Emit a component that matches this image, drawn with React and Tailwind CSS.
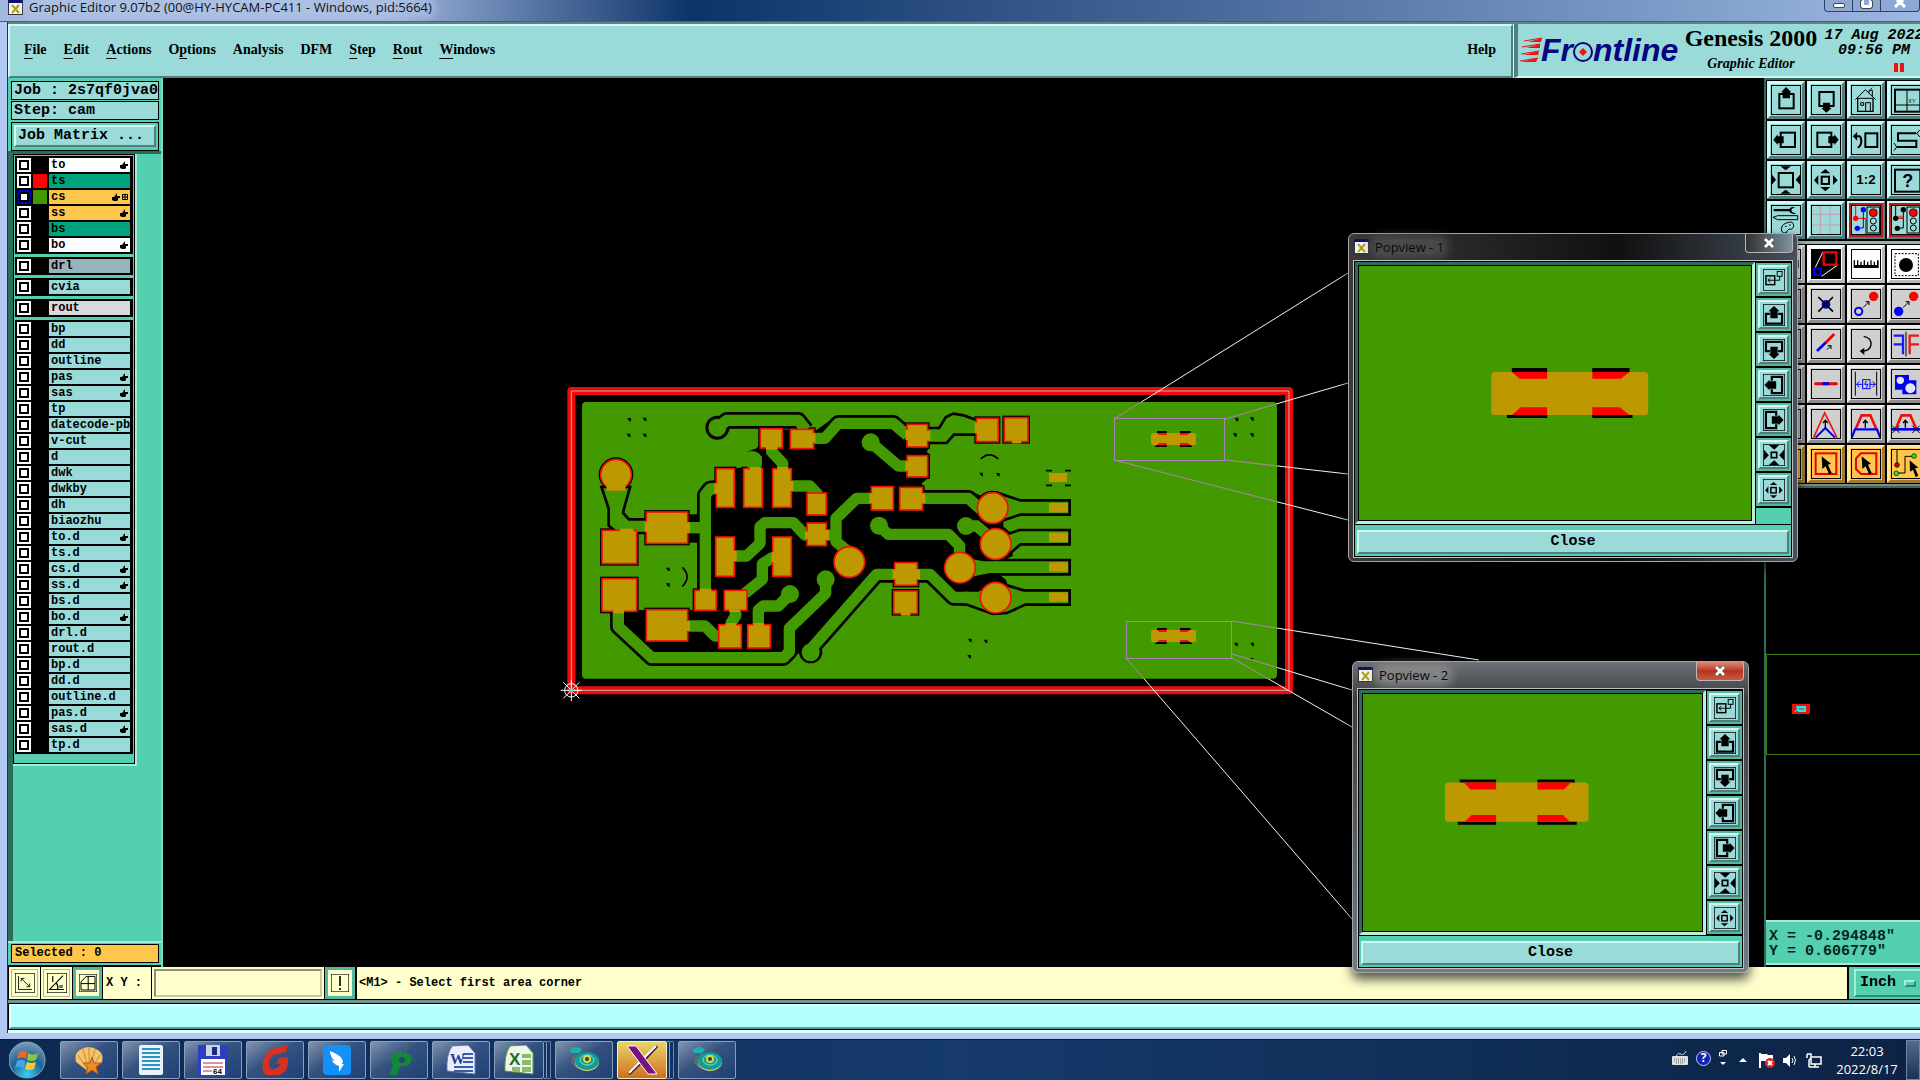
import { useState } from 'react';
import clsx from 'clsx';

const RAISED = 'border-2 border-t-[#d3f8f4] border-l-[#d3f8f4] border-b-[#4f7f80] border-r-[#4f7f80]';

const menus = [
  ['', 'F', 'ile'],
  ['', 'E', 'dit'],
  ['', 'A', 'ctions'],
  ['O', 'p', 'tions'],
  ['Analysis', '', ''],
  ['DFM', '', ''],
  ['', 'S', 'tep'],
  ['', 'R', 'out'],
  ['', 'W', 'indows'],
];

const AQUA = 'bg-[#9adbda]';

const layerGroups = [
  [
    { name: 'to', bg: 'bg-white', hand: true },
    { name: 'ts', bg: 'bg-[#00a47c]', swatch: 'bg-[#ff0000]' },
    { name: 'cs', bg: 'bg-[#ffc64c]', swatch: 'bg-[#439a00]', hand: true, grid: true, active: true },
    { name: 'ss', bg: 'bg-[#ffc64c]', hand: true },
    { name: 'bs', bg: 'bg-[#00a47c]' },
    { name: 'bo', bg: 'bg-white', hand: true },
  ],
  [{ name: 'drl', bg: 'bg-[#99b3bd]' }],
  [{ name: 'cvia' }],
  [{ name: 'rout', bg: 'bg-[#d9d9dc]' }],
  [
    { name: 'bp' },
    { name: 'dd' },
    { name: 'outline' },
    { name: 'pas', hand: true },
    { name: 'sas', hand: true },
    { name: 'tp' },
    { name: 'datecode-pbc' },
    { name: 'v-cut' },
    { name: 'd' },
    { name: 'dwk' },
    { name: 'dwkby' },
    { name: 'dh' },
    { name: 'biaozhu' },
    { name: 'to.d', hand: true },
    { name: 'ts.d' },
    { name: 'cs.d', hand: true },
    { name: 'ss.d', hand: true },
    { name: 'bs.d' },
    { name: 'bo.d', hand: true },
    { name: 'drl.d' },
    { name: 'rout.d' },
    { name: 'bp.d' },
    { name: 'dd.d' },
    { name: 'outline.d' },
    { name: 'pas.d', hand: true },
    { name: 'sas.d', hand: true },
    { name: 'tp.d' },
  ],
];

// Tool glyphs, all drawn on a 90x90 grid
const glyphs = {
  up: (
    <>
      <rect x="25" y="27" width="43" height="43" fill="none" stroke="#000" strokeWidth="6" />
      <path d="M45 6L61 22H57V40H35V22H30Z" />
    </>
  ),
  down: (
    <>
      <rect x="25" y="21" width="43" height="42" fill="none" stroke="#000" strokeWidth="6" />
      <path d="M46 83L62 69H57V53H36V69H31Z" />
    </>
  ),
  left: (
    <>
      <rect x="29" y="23" width="43" height="43" fill="none" stroke="#000" strokeWidth="6" />
      <path d="M7 44L20 28V34H38V55H20V60Z" />
    </>
  ),
  right: (
    <>
      <rect x="19" y="23" width="42" height="43" fill="none" stroke="#000" strokeWidth="6" />
      <path d="M83 44L70 28V34H52V55H70V60Z" />
    </>
  ),
  popUp: (
    <>
      <path d="M28 40H12V80H78V40H62" fill="none" stroke="#000" strokeWidth="9" />
      <path d="M45 8L68 30H60V58H30V30H22Z" />
    </>
  ),
  popDown: (
    <>
      <path d="M28 50H12V12H78V50H62" fill="none" stroke="#000" strokeWidth="9" />
      <path d="M45 82L68 60H60V32H30V60H22Z" />
    </>
  ),
  popLeft: (
    <>
      <path d="M36 28V12H78V78H36V62" fill="none" stroke="#000" strokeWidth="9" />
      <path d="M6 45L26 24V30H54V60H26V66Z" />
    </>
  ),
  popRight: (
    <>
      <path d="M54 28V12H12V78H54V62" fill="none" stroke="#000" strokeWidth="9" />
      <path d="M84 45L64 24V30H36V60H64V66Z" />
    </>
  ),
  home: (
    <g fill="none" stroke="#000" strokeWidth="3">
      <path d="M13 44L43 14L74 44M64 34V16H54V24M58 14l5-6" />
      <path d="M20 40V79H66V40" strokeWidth="4" />
      <path d="M20 40H66M29 53h9v8h-9zM44 79V53H58V79" />
    </g>
  ),
  panes: (
    <>
      <rect x="12" y="14" width="76" height="66" fill="none" stroke="#000" strokeWidth="6" />
      <path d="M48 14V80M12 60H88" stroke="#000" strokeWidth="3" />
      <text x="52" y="54" fontSize="16" fontFamily="Liberation Sans">XY</text>
    </>
  ),
  undo: (
    <g fill="none" stroke="#000" strokeWidth="6">
      <rect x="43" y="25" width="36" height="41" />
      <path d="M16 34H26Q31 38 31 50Q30 64 20 68" />
      <path d="M6 34L18 22V46Z" fill="#000" strokeWidth="1" />
    </g>
  ),
  snake: (
    <g fill="none" stroke="#000" strokeWidth="6">
      <path d="M76 25H21V47H76V66H18" />
      <path d="M86 15L78 25L86 36M9 54L17 66L9 77" strokeWidth="3" />
    </g>
  ),
  zoomIn: (
    <>
      <rect x="23" y="24" width="43" height="43" fill="none" stroke="#000" strokeWidth="6" />
      <path d="M28 4H60L44 16ZM28 86H60L44 74ZM2 28V60L15 44ZM88 28V60L74 44Z" />
    </>
  ),
  zoomOut: (
    <>
      <rect x="32" y="35" width="22" height="22" fill="none" stroke="#000" strokeWidth="6" />
      <path d="M28 25H58L43 12ZM28 66H58L43 79ZM22 30V60L9 46ZM66 30V60L80 46Z" />
    </>
  ),
  squeeze: (
    <>
      <rect x="34" y="34" width="22" height="22" fill="none" stroke="#000" strokeWidth="7" />
      <path d="M24 4H66L46 24ZM24 86H66L46 66ZM4 24V66L24 46ZM86 24V66L66 46Z" />
    </>
  ),
  ratio: (
    <text x="45" y="58" textAnchor="middle" fontSize="40" fontWeight="bold" fontFamily="Liberation Sans">1:2</text>
  ),
  help: (
    <>
      <rect x="12" y="14" width="76" height="66" fill="none" stroke="#000" strokeWidth="6" />
      <text x="50" y="66" textAnchor="middle" fontSize="54" fontWeight="bold" fontFamily="Liberation Sans">?</text>
    </>
  ),
  tools: (
    <>
      <path d="M8 12H55Q60 4 72 7L62 12V20L76 26Q60 30 54 19H8Z" />
      <path d="M6 37L20 32H80V44H20Z" fill="none" stroke="#000" strokeWidth="3" />
      <path d="M32 78Q28 60 46 54Q68 46 68 62Q66 76 54 72Q48 76 46 84Q34 86 32 78ZM42 64h5M54 60h5" fill="none" stroke="#000" strokeWidth="3" />
    </>
  ),
  gridLines: <path d="M28 0V90M57 0V90M0 28H90M0 60H90" stroke="#c79ba7" strokeWidth="3" />,
  signalBlue: (
    <>
      <path d="M14 0V40H44V88" fill="none" stroke="#f00" strokeWidth="3" />
      <path d="M37 14V69H20" fill="none" stroke="#00f" strokeWidth="3" />
      <circle cx="14" cy="40" r="8" fill="#f00" />
      <circle cx="37" cy="14" r="8" fill="#00f" />
      <circle cx="19" cy="70" r="8" fill="#00f" />
      <Traffic />
    </>
  ),
  signalBlack: (
    <>
      <path d="M14 0V40M37 14V69H20" fill="none" stroke="#000" strokeWidth="3" />
      <path d="M22 40H38M24 32v8M30 32v8M36 32v8" stroke="#d00" strokeWidth="3" />
      <circle cx="14" cy="40" r="8" />
      <circle cx="37" cy="14" r="8" />
      <circle cx="19" cy="70" r="8" />
      <Traffic />
    </>
  ),
  popview: (
    <>
      <rect width="90" height="90" />
      <path d="M12 57L36 8M32 82L80 48" stroke="#fff" strokeWidth="3" />
      <rect x="38" y="10" width="38" height="37" fill="none" stroke="#f00000" strokeWidth="7" />
      <rect x="10" y="58" width="20" height="20" fill="none" stroke="#0000f0" strokeWidth="6" />
    </>
  ),
  ruler: <path d="M8 34H12V48H18V34H22V48H28V38H32V48H38V34H42V48H48V38H52V48H58V34H62V48H68V38H72V48H78V34H83V57H8Z" />,
  blob: (
    <>
      <rect x="12" y="14" width="70" height="66" fill="none" stroke="#000" strokeWidth="3" strokeDasharray="6 4" />
      <circle cx="45" cy="48" r="21" />
    </>
  ),
  cross: (
    <>
      <circle cx="45" cy="46" r="13" fill="#0000e6" />
      <path d="M22 24L66 68M66 24L22 68" stroke="#000" strokeWidth="5" />
    </>
  ),
  moveOpen: (
    <>
      <circle cx="23" cy="67" r="11" fill="none" stroke="#00f" strokeWidth="6" />
      <circle cx="68" cy="22" r="14" fill="#f00" />
      <Diagonal x={36} y={56} />
    </>
  ),
  moveSolid: (
    <>
      <circle cx="23" cy="67" r="14" fill="#00f" />
      <circle cx="68" cy="22" r="14" fill="#f00" />
      <Diagonal x={36} y={56} />
    </>
  ),
  line: (
    <>
      <path d="M18 66L45 40" stroke="#0000f0" strokeWidth="8" />
      <path d="M43 42L70 15" stroke="#f00000" strokeWidth="8" />
      <Diagonal x={48} y={62} small />
    </>
  ),
  rotate: (
    <>
      <path d="M38 22Q62 26 60 48Q56 66 36 66" fill="none" stroke="#000" strokeWidth="4" />
      <path d="M26 66L40 56V78Z" />
    </>
  ),
  mirror: (
    <>
      <path d="M8 20H36V76M8 46H36" fill="none" stroke="#1a1aff" strokeWidth="7" />
      <path d="M45 8V82" stroke="#000" strokeWidth="3" />
      <path d="M84 20H56V76M56 46H84" fill="none" stroke="#e81818" strokeWidth="7" />
    </>
  ),
  segment: (
    <>
      <path d="M14 44H76" stroke="#f00000" strokeWidth="9" strokeLinecap="round" />
      <path d="M34 44H54" stroke="#0000f0" strokeWidth="9" />
    </>
  ),
  stretch: (
    <>
      <path d="M13 8V80M77 8V80" stroke="#000" strokeWidth="3" />
      <path d="M17 46H73M25 37L17 46L25 55M65 37L73 46L65 55" fill="none" stroke="#00f" strokeWidth="3" />
      <rect x="35" y="32" width="22" height="27" fill="#cfcfcf" stroke="#00f" strokeWidth="3" />
      <path d="M46 36L41 46H51L46 56" fill="none" stroke="#00f" strokeWidth="3" />
    </>
  ),
  shapes: (
    <>
      <path d="M12 18H54V34H76V76H34V62H12Z" fill="#0000f0" />
      <circle cx="28" cy="34" r="11" fill="#e4e4ff" />
      <circle cx="58" cy="58" r="15" fill="#e4e4ff" />
    </>
  ),
  peak: (
    <>
      <path d="M8 86L41 12L78 86" fill="none" stroke="#e81818" strokeWidth="5" />
      <path d="M14 86L43 57L72 86" fill="none" stroke="#0000f0" strokeWidth="6" />
      <Upward />
    </>
  ),
  trapezoid: (
    <>
      <path d="M14 60L32 19H58L76 60" fill="none" stroke="#f01010" strokeWidth="8" />
      <path d="M2 86L12 61H78L88 86" fill="none" stroke="#0000f0" strokeWidth="7" />
      <Upward />
    </>
  ),
  trapezoidCut: (
    <>
      <path d="M14 60L32 19H58L76 60" fill="none" stroke="#f01010" strokeWidth="8" />
      <path d="M2 61H88" stroke="#0000f0" strokeWidth="8" />
      <path d="M4 50L26 72M26 50L4 72M64 50L86 72M86 50L64 72" stroke="#000" strokeWidth="3" />
      <Upward />
    </>
  ),
  pickSquare: (
    <>
      <rect x="14" y="13" width="62" height="62" fill="none" stroke="#e60000" strokeWidth="6" />
      <Pointer />
    </>
  ),
  pickPoly: (
    <>
      <path d="M30 13H76V75H30L15 60V28Z" fill="none" stroke="#e60000" strokeWidth="6" />
      <Pointer />
    </>
  ),
  pickNet: (
    <>
      <path d="M18 0V48M18 72H42V22H68" fill="none" stroke="#000" strokeWidth="3" />
      <circle cx="18" cy="48" r="7" fill="#c00" stroke="#000" strokeWidth="2" />
      <circle cx="16" cy="73" r="7" fill="#2e2" stroke="#000" strokeWidth="2" />
      <circle cx="69" cy="21" r="7" fill="#2e2" stroke="#000" strokeWidth="2" />
      <path d="M56 34L82 56L72 57L82 80L74 84L66 62L57 68Z" />
    </>
  ),
  link: (
    <g fill="none" stroke="#000" strokeWidth="6">
      <rect x="12" y="28" width="36" height="36" />
      <path d="M20 46H68V28M30 37L20 46L30 55" strokeWidth="4" />
      <rect x="58" y="10" width="20" height="20" strokeWidth="4" />
    </g>
  ),
  diagonal: <path d="M16 14V74H76M28 24L66 62M28 38V24H42M66 48V62H52" fill="none" stroke="#000" strokeWidth="4" />,
  angle: (
    <>
      <path d="M76 74H12L72 12M26 14V40M42 46Q52 58 48 74" fill="none" stroke="#000" strokeWidth="5" />
      <text x="54" y="68" fontSize="28" fontFamily="Liberation Sans">α</text>
    </>
  ),
  snap: <path d="M10 80V40L36 12H80V80ZM10 48H80M46 12V80" fill="none" stroke="#000" strokeWidth="5" />,
  alert: <path d="M45 10V60M45 70V80" stroke="#000" strokeWidth="8" />,
};

function Traffic() {
  return (
    <>
      <rect x="48" y="6" width="38" height="78" fill="#9adbda" stroke="#000" strokeWidth="3" />
      <circle cx="67" cy="23" r="12" fill="#f00" stroke="#000" strokeWidth="2" />
      <circle cx="67" cy="48" r="9" fill="none" stroke="#000" strokeWidth="3" />
      <circle cx="67" cy="69" r="9" fill="none" stroke="#000" strokeWidth="3" />
    </>
  );
}

function Diagonal({ x, y, small }) {
  const d = small ? 12 : 18;
  return (
    <path
      d={`M${x} ${y}l${d} ${-d}m-10 0h10v10`}
      fill="none"
      stroke="#000"
      strokeWidth="3"
    />
  );
}

function Upward() {
  return <path d="M43 56V36M36 42L43 34L50 42" fill="none" stroke="#000" strokeWidth="4" />;
}

function Pointer() {
  return <path d="M32 22L60 44L51 47L62 72L54 76L44 52L34 60Z" />;
}

function Glyph({ name, className }) {
  return (
    <svg viewBox="0 0 90 90" className={className} aria-hidden="true">
      {glyphs[name]}
      <rect x="1.5" y="1.5" width="87" height="87" fill="none" stroke="#000" strokeWidth="3" />
    </svg>
  );
}

const tones = {
  aqua: 'bg-[#9adbda] border-t-[#d3f8f4] border-l-[#d3f8f4] border-b-[#4f7f80] border-r-[#4f7f80]',
  red: 'bg-[#9adbda] border-t-[#d3f8f4] border-l-[#d3f8f4] border-b-[#4f7f80] border-r-[#4f7f80]',
  white: 'bg-white border-t-white border-l-white border-b-[#b9b9b9] border-r-[#b9b9b9]',
  grey: 'bg-[#cfcfcf] border-t-[#eeeeee] border-l-[#eeeeee] border-b-[#8e8e8e] border-r-[#8e8e8e]',
  orange: 'bg-[#ffc64c] border-t-[#ffe6a8] border-l-[#ffe6a8] border-b-[#9c7a2e] border-r-[#9c7a2e]',
};

function ToolButton({ glyph, tone }) {
  return (
    <button aria-label={glyph} className={clsx('flex size-[38px] items-center justify-center border-3', tones[tone])}>
      <Glyph name={glyph} className={clsx('size-[30px]', tone === 'red' && 'outline-2 outline-[#c01818]')} />
    </button>
  );
}

const viewTools = [
  'up', 'down', 'home', 'panes',
  'left', 'right', 'undo', 'snake',
  'zoomIn', 'zoomOut', 'ratio', 'help',
  'tools', 'gridLines', 'signalBlue', 'signalBlack',
];

const editTools = [
  ['ruler', 'white'], ['popview', 'white'], ['ruler', 'white'], ['blob', 'white'],
  ['moveOpen', 'grey'], ['cross', 'grey'], ['moveOpen', 'grey'], ['moveSolid', 'grey'],
  ['line', 'grey'], ['line', 'grey'], ['rotate', 'grey'], ['mirror', 'grey'],
  ['segment', 'grey'], ['segment', 'grey'], ['stretch', 'grey'], ['shapes', 'grey'],
  ['peak', 'grey'], ['peak', 'grey'], ['trapezoid', 'grey'], ['trapezoidCut', 'grey'],
  ['pickSquare', 'orange'], ['pickSquare', 'orange'], ['pickPoly', 'orange'], ['pickNet', 'orange'],
];

function XIcon() {
  return (
    <svg viewBox="0 0 15 15" className="size-[15px] shrink-0" aria-hidden="true">
      <rect x="0.5" y="0.5" width="14" height="14" fill="#f4f4f4" stroke="#333" />
      <rect x="0" y="0" width="15" height="3" fill="#10106a" />
      <path d="M4 5L11 13M11 5L4 13" stroke="#a8a414" strokeWidth="2" />
    </svg>
  );
}

function TitleBar() {
  return (
    <header className="flex h-[22px] shrink-0 items-start border-b border-[#4a6070] bg-linear-to-r from-[#a3b8e0] from-20% via-[#0b3468] via-36% to-[#9db8e2] pl-2">
      <div className="flex h-[14px] flex-1 items-center gap-[6px]">
        <XIcon />
        <h1 className="rounded-full bg-[#b5c8e8]/50 font-['Open_Sans',sans-serif] text-[13px] leading-[14px] whitespace-nowrap text-[#111] shadow-[0_0_6px_5px_rgba(181,200,232,0.5)]">
          Graphic Editor 9.07b2 (00@HY-HYCAM-PC411 - Windows, pid:5664)
        </h1>
      </div>
      <div className="flex h-[12px] rounded-b-sm border border-t-0 border-[#2c4166] bg-[#8fa9d4]">
        <button aria-label="Minimize" className="flex w-7 items-center justify-center border-r border-[#2c4166]">
          <span className="h-[5px] w-3 rounded-xs border border-[#444] bg-white" />
        </button>
        <button aria-label="Maximize" className="flex w-7 items-start justify-center border-r border-[#2c4166]">
          <span className="h-2 w-[11px] rounded-xs border-3 border-t-0 border-white outline outline-[#444]" />
        </button>
        <button aria-label="Close" className="flex w-[38px] items-start justify-center">
          <svg viewBox="0 0 12 8" className="h-2 w-3">
            <path d="M1 7L6 2L11 7M3 0L6 3L9 0" stroke="#fff" strokeWidth="3" fill="none" />
          </svg>
        </button>
      </div>
    </header>
  );
}

function Logo() {
  return (
    <svg viewBox="0 0 162 34" className="mt-[6px] h-[34px] w-[162px] shrink-0" role="img" aria-label="Frontline">
      <path d="M6 7L24 4M4 13L22 10M3 20L21 17M2 27L20 24" stroke="#e11" strokeWidth="1" />
      <path d="M24 4L10 8H23ZM22 10L8 14H22ZM21 17L5 21H20ZM20 24L3 28H18Z" fill="#f01515" />
      <g fill="#06067f" fontFamily="Liberation Sans, sans-serif" fontWeight="bold" fontStyle="italic" fontSize="32">
        <text x="23" y="27">Fr</text>
        <text x="75" y="27">ntline</text>
      </g>
      <circle cx="65" cy="18" r="9" fill="none" stroke="#06067f" strokeWidth="2" />
      <path d="M65 14L69 18L65 22L61 18Z" fill="#f01515" />
    </svg>
  );
}

function MenuBar() {
  return (
    <div className="flex h-[56px] shrink-0 gap-px border-t-2 border-[#5d8383] bg-[#d3f8f4]">
      <nav className={clsx('flex flex-1 items-center gap-[17px] pr-[15px] pb-[3px] pl-[14px]', AQUA, RAISED, 'font-["Liberation_Serif",serif] text-[14px] font-bold')}>
        {menus.map(([pre, key, post]) => (
          <button key={pre + key + post}>
            {pre}
            <span className="underline underline-offset-4">{key}</span>
            {post}
          </button>
        ))}
        <button className="ml-auto">Help</button>
      </nav>
      <div className={clsx('flex w-[406px] items-start overflow-hidden border-b-2 border-l-4 border-b-[#d3f8f4] border-l-[#4f7f80] pt-1', AQUA)}>
        <Logo />
        <div className="flex w-[142px] shrink-0 flex-col items-center font-['Liberation_Serif',serif] font-bold">
          <span className="text-[24px] leading-[20px] whitespace-nowrap">Genesis 2000</span>
          <span className="pt-[6px] text-[14px] leading-[20px] whitespace-nowrap italic">Graphic Editor</span>
        </div>
        <div className="flex w-[100px] shrink-0 flex-col items-center pl-1 font-['Liberation_Mono',monospace] text-[15px] leading-[15px] font-bold whitespace-pre italic">
          <span>17 Aug 2022</span>
          <span>09:56 PM</span>
          <span className="mt-[5px] mr-[18px] flex gap-[2px] self-end">
            <i className="h-[9px] w-1 bg-[#f01010]" />
            <i className="h-[9px] w-1 bg-[#f01010]" />
          </span>
        </div>
      </div>
    </div>
  );
}

function Hand() {
  return (
    <svg viewBox="0 0 8 8" className="size-2" aria-hidden="true">
      <path d="M0 4H2L5 0V3H8V5H6V7L5 8H2L0 7Z" />
    </svg>
  );
}

function LayerRow({ layer }) {
  const [on, setOn] = useState(false);
  return (
    <label className="flex h-4 gap-[2px] p-px">
      <span className={clsx('size-[14px] p-[2px]', layer.active ? 'bg-[#0000a8]' : 'bg-white')}>
        <input
          type="checkbox"
          checked={on}
          onChange={() => setOn(!on)}
          className="block size-[10px] appearance-none border-2 border-black bg-white checked:bg-black"
        />
      </span>
      <span className={clsx('size-[14px]', layer.swatch)} />
      <span className={clsx('flex h-[14px] w-[81px] items-center overflow-hidden pr-[2px] pl-[2px]', layer.bg ?? AQUA)}>
        <span className="flex-1 text-[12px] leading-[14px] whitespace-nowrap">{layer.name}</span>
        {layer.hand && <Hand />}
        {layer.grid && (
          <svg viewBox="0 0 6 6" className="ml-[2px] size-[6px]" aria-hidden="true">
            <path d="M0.500 0.500H5.500V5.500H0.500ZM3 0V6M0 3H6" fill="none" stroke="#000" />
          </svg>
        )}
      </span>
    </label>
  );
}

function Sidebar() {
  return (
    <aside className="flex w-[155px] shrink-0 flex-col border-r-2 border-[#7fd9c2] bg-[#54cfaf] pt-[3px] font-['Liberation_Mono',monospace] font-bold">
      <div className="flex flex-col gap-px pr-[2px] pl-[3px] text-[15px]">
        <div className={clsx('h-[19px] border border-black pl-[2px] leading-[17px] whitespace-pre', AQUA)}>Job : 2s7qf0jva0</div>
        <div className={clsx('h-[19px] border border-black pl-[2px] leading-[17px] whitespace-pre', AQUA)}>Step: cam</div>
        <div className="mt-px border border-black p-[2px]">
          <button className={clsx('h-[22px] w-full pl-[2px] text-left leading-[18px]', AQUA, RAISED)}>Job Matrix ...</button>
        </div>
      </div>
      <div className="flex flex-1 flex-col border-t-3 border-l-5 border-[#2f6b5c]">
        <div className="w-[124px] border-r-2 border-b-2 border-[#a7ecd8]">
          <div className="flex flex-col gap-[3px] border border-black p-px pb-[9px]">
            {layerGroups.map((group) => (
              <div key={group[0].name} className="w-[118px] bg-black p-px">
                {group.map((layer) => (
                  <LayerRow key={layer.name} layer={layer} />
                ))}
              </div>
            ))}
          </div>
        </div>
      </div>
      <div className="border-t-2 border-[#a7ecd8] pt-px pr-[2px] pb-[2px] pl-[3px]">
        <div className="h-[19px] border border-black bg-[#ffc64c] pl-[3px] text-[12px] leading-[17px]">Selected : 0</div>
      </div>
      <div className="h-[2px] bg-black" />
    </aside>
  );
}

// Board artwork is digitised on a grid three times finer than the canvas
const pads = [
  [600, 145, 68, 60], [690, 147, 72, 60], [468, 265, 56, 118], [550, 265, 58, 118], [637, 265, 58, 118],
  [740, 338, 60, 68], [740, 428, 60, 70], [466, 470, 58, 120], [637, 470, 58, 120], [403, 630, 67, 62],
  [492, 630, 70, 62], [475, 733, 70, 72], [562, 733, 70, 72], [258, 395, 126, 96], [125, 450, 106, 102],
  [125, 595, 106, 100], [258, 688, 126, 96], [1040, 132, 64, 70], [1040, 226, 64, 66], [933, 319, 68, 72],
  [1018, 321, 71, 70], [1003, 547, 70, 70], [1000, 632, 73, 70], [1248, 114, 68, 72], [1332, 112, 73, 74],
];

const roundPads = [[168, 284], [868, 546], [1298, 384], [1307, 492], [1200, 563], [1307, 653]];

// spots where a trace enters a pad and hides its red rim
const joints = [
  [140, 318, 56, 14], [750, 160, 16, 28], [570, 261, 34, 10], [652, 261, 32, 10], [688, 303, 12, 30],
  [463, 311, 12, 30], [378, 427, 12, 32], [254, 425, 12, 30], [180, 446, 40, 10], [160, 690, 32, 10],
  [378, 723, 12, 30], [420, 626, 34, 10], [518, 512, 12, 32], [795, 450, 12, 30], [735, 455, 12, 22],
  [634, 516, 10, 30], [508, 688, 32, 8], [496, 729, 32, 9], [580, 729, 32, 9], [928, 340, 12, 30],
  [1084, 340, 12, 30], [998, 568, 12, 30], [1068, 568, 12, 30], [1036, 150, 10, 30], [1099, 152, 12, 30],
  [1036, 244, 10, 28], [1244, 128, 10, 32], [1023, 698, 28, 9], [1356, 182, 28, 8], [618, 201, 34, 8],
];

const vias = [[472, 143], [932, 187], [690, 642], [797, 598], [752, 817], [957, 437], [1218, 438]];

const outlinedTraces = [
  'M475 142L500 121H715L738 150',
  'M760 175H795L835 130H1000L1042 166',
  'M797 600V640L688 745V815L670 833H275L175 740V690',
  'M436 635V345L450 327L470 325',
  'M1090 355H1225L1262 388',
  'M1075 583H1110L1180 652H1225',
  'M1000 583H950L755 805',
];

const traces = [
  'M384 443H436',
  'M932 187L1015 258H1045',
  'M635 205V215L668 250V270',
  'M580 240V265',
  'M695 318H750L775 345',
  'M935 355H890L828 415V485L865 515',
  'M800 465H828',
  'M740 465H735L700 428H615L600 440V490L560 528H524',
  'M640 530L607 552V598L555 640',
  'M525 690L528 705L510 735',
  'M690 642L655 678H610L595 690V735',
  'M384 738H435L465 768H480',
  'M957 437L985 463H1165L1199 497V530',
  'M1218 438H1250L1285 468',
];

const shapes = [
  'M130 325L150 385V435L175 455H258V422H205L185 400L188 385L205 325Z',
  'M1105 148H1140L1160 115L1180 105L1210 110L1248 124V160H1180L1158 185H1105Z',
  'M1320 345L1380 365H1525V400H1380L1320 420Z',
  'M1330 470L1380 454H1525V489H1380L1350 515Z',
  'M1235 537L1270 544H1525V579H1290L1235 590Z',
  'M1210 635H1255L1300 610L1340 620L1390 635H1525V670H1395L1340 695L1300 698L1220 670H1210Z',
];

const ground =
  'M596 148L770 150L825 110H1000L1045 150H1110V200L1100 215L1110 225V290L1085 310L1095 330H1225L1270 350L1298 430' +
  'L1330 420V440L1345 452L1380 480L1358 515V528L1290 560L1338 600L1345 620L1300 650H1180L1105 580H940L750 820H715L675 850' +
  'H275L185 730L185 695L232 690H400L412 680V490L455 455V345L470 300V265H530L550 262H606V230L575 213L558 216L590 205L596 195Z';

const ticks = [
  [208, 118], [254, 117], [206, 165], [254, 165], [324, 567], [324, 614], [2030, 118], [2076, 116], [2025, 164],
  [2076, 164], [2028, 792], [2077, 792], [2075, 838], [1230, 780], [1277, 783], [1228, 829], [1264, 282], [1314, 283],
];

const leaders = [
  'M1114 419L1348 273', 'M1225 419L1348 383', 'M1225 460L1348 474', 'M1114 460L1348 520',
  'M1232 621L1479 660', 'M1232 654L1352 690', 'M1232 658L1352 727', 'M1126 658L1352 919',
];

function BoardCanvas() {
  return (
    <main className="min-w-0 flex-1 bg-black">
      <svg viewBox="163 78 1601 889" className="block size-full" role="img" aria-label="Board layers">
        <defs>
          <clipPath id="copper">
            <rect x="582" y="402" width="695" height="277" />
          </clipPath>
        </defs>
        <g transform="translate(560 380) scale(0.33333)" strokeLinejoin="round">
          <rect x="34" y="33" width="2153" height="898" fill="none" stroke="#ee0a0a" strokeWidth="24" />
          <rect x="34" y="33" width="2153" height="898" fill="none" stroke="#c4b0b0" strokeWidth="3" />
          <rect x="66" y="66" width="2085" height="830" rx="12" fill="#439a00" />
          <path d={ground} fill="#000" />
          <rect x="384" y="403" width="34" height="85" />
          <g>
            {pads.map(([x, y, w, h]) => (
              <rect key={`${x}-${y}`} x={x - 5} y={y - 5} width={w + 10} height={h + 10} />
            ))}
            {roundPads.map(([x, y]) => (
              <circle key={`${x}-${y}`} cx={x} cy={y} r="52" />
            ))}
            {outlinedTraces.map((d) => (
              <path key={d} d={d} fill="none" stroke="#000" strokeWidth="50" />
            ))}
            {shapes.map((d) => (
              <path key={d} d={d} stroke="#000" strokeWidth="16" strokeLinejoin="miter" />
            ))}
            <circle cx="472" cy="143" r="36" />
            <circle cx="752" cy="815" r="35" />
          </g>
          <g fill="none" stroke="#439a00" strokeWidth="34">
            {[...outlinedTraces, ...traces].map((d) => (
              <path key={d} d={d} />
            ))}
          </g>
          <g fill="#439a00">
            {shapes.map((d) => (
              <path key={d} d={d} />
            ))}
            {vias.map(([x, y]) => (
              <circle key={`${x}-${y}`} cx={x} cy={y} r="27" />
            ))}
            <circle cx="580" cy="240" r="26" />
          </g>
          <g fill="#bd9800" stroke="#f01008" strokeWidth="5">
            {pads.map(([x, y, w, h]) => (
              <rect key={`${x}-${y}`} x={x + 1} y={y + 1} width={w - 2} height={h - 2} strokeLinejoin="miter" />
            ))}
            {roundPads.map(([x, y]) => (
              <circle key={`${x}-${y}`} cx={x} cy={y} r="46" />
            ))}
          </g>
          <g fill="#bd9800">
            {joints.map(([x, y, w, h]) => (
              <rect key={`${x}-${y}`} x={x} y={y} width={w} height={h} />
            ))}
            {[369, 458, 547, 637].map((y) => (
              <rect key={y} x="1467" y={y} width="57" height="28" />
            ))}
            <rect x="1467" y="279" width="54" height="27" />
          </g>
          <path d="M1458 272h18M1515 272h18M1458 316h18M1515 316h18" stroke="#000" strokeWidth="5" />
          <path d="M1262 237Q1288 212 1315 237M367 562Q396 590 367 619" fill="none" stroke="#000" strokeWidth="5" />
          {ticks.map(([x, y]) => (
            <path key={`${x}-${y}`} d={`M${x - 6} ${y - 4}h11v10l-5 0z`} />
          ))}
          {[159, 750].map((y) => (
            <g key={y}>
              <path d={`M1791 ${y - 6}h29v48h-35v-4h6zM1860 ${y - 6}h32v44h4v4h-36z`} />
              <rect x="1773" y={y} width="135" height="36" rx="6" fill="#bd9800" />
              <path d={`M1791 ${y}h29v6h-22zM1860 ${y}h30l-8 6h-22zM1791 ${y + 36}h29v-6h-22zM1860 ${y + 36}h30l-8 -6h-22z`} fill="#f01008" />
            </g>
          ))}
          <g fill="none" stroke="#fff" strokeWidth="3">
            <circle cx="34" cy="931" r="20" />
            <path d="M2 931H66M34 899V963M10 907L58 955M58 907L10 955" />
          </g>
          <circle cx="34" cy="931" r="6" fill="#3fe0f0" />
        </g>
        <g fill="none" stroke="#f2f2f2">
          {leaders.map((d) => (
            <path key={d} d={d} />
          ))}
        </g>
        <g fill="none" stroke="#a884ae" clipPath="url(#copper)">
          {leaders.map((d) => (
            <path key={d} d={d} strokeWidth="2" stroke="#439a00" />
          ))}
          {leaders.map((d) => (
            <path key={`m${d}`} d={d} />
          ))}
          <rect x="1114.500" y="418.500" width="110" height="42" />
          <rect x="1126.500" y="621.500" width="105" height="37" />
        </g>
      </svg>
    </main>
  );
}

function ToolPanel() {
  return (
    <aside className="flex w-[156px] shrink-0 flex-col overflow-hidden border-l-2 border-[#2f6b5c] bg-black">
      <div className="border-t-2 border-[#2f6b5c] pl-px">
        <div className="grid grid-cols-[repeat(4,38px)] gap-[2px] pt-px">
          {viewTools.map((name) => (
            <ToolButton key={name} glyph={name} tone={name.startsWith('signal') ? 'red' : 'aqua'} />
          ))}
        </div>
        <div className="mt-[2px] h-[3px] w-full bg-[#8fb5ac]" />
        <div className="grid grid-cols-[repeat(4,38px)] gap-[2px] pt-px">
          {editTools.map(([name, tone], i) => (
            <ToolButton key={i} glyph={name} tone={tone} />
          ))}
        </div>
        <div className="mt-px h-1 border-b-2 border-[#2f6b5c] bg-[#858585]" />
      </div>
      <svg viewBox="1766 488 154 432" className="min-h-0 w-full flex-1" role="img" aria-label="Overview">
        <rect x="1766.500" y="654.500" width="160" height="100" fill="none" stroke="#3f7d14" />
        <rect x="1792" y="704" width="18" height="10" fill="#f01010" />
        <path d="M1796 706H1806V712H1794L1797 709Z" fill="#2fe3ea" />
        <path d="M1799 709h5M1794 714l3-3 3 3" stroke="#a33" fill="none" />
      </svg>
      <div className="h-[45px] border-t-2 border-b-2 border-t-[#a7ecd8] border-b-[#a7ecd8] bg-[#54cfaf] pt-[7px] pl-[3px] font-['Liberation_Mono',monospace] text-[15px] leading-[15px] font-bold whitespace-pre text-[#06261d]">
        <div>X = -0.294848"</div>
        <div>Y = 0.606779"</div>
      </div>
      <div className="h-[2px] bg-black" />
    </aside>
  );
}

function CommandBar() {
  return (
    <div className="flex h-[33px] shrink-0 gap-px bg-black pb-px font-['Liberation_Mono',monospace] text-[12px] font-bold">
      <div className="flex gap-px pl-px">
        {['diagonal', 'angle'].map((name) => (
          <button key={name} aria-label={name} className="flex w-[31px] items-center justify-center bg-[#ffffcc] outline-1 -outline-offset-3 outline-[#b8b896]">
            <Glyph name={name} className="size-5" />
          </button>
        ))}
        <button aria-label="snap" className="flex w-[29px] items-center justify-center border-3 border-[#54b99c] bg-[#ffffcc]">
          <Glyph name="snap" className="size-[18px]" />
        </button>
      </div>
      <label htmlFor="xy" className="flex w-[48px] items-center bg-[#ffffcc] pl-[3px] whitespace-pre">X Y :</label>
      <div className="w-[172px] bg-[#ffffcc] p-[2px]">
        <input id="xy" className="size-full border-2 border-t-[#8f8f78] border-r-[#c9c9a4] border-b-[#c9c9a4] border-l-[#8f8f78] bg-[#ffffcc] px-1 outline-none" />
      </div>
      <button aria-label="alert" className="flex w-[30px] items-center justify-center border-3 border-[#54b99c] bg-[#ffffcc]">
        <Glyph name="alert" className="size-[18px]" />
      </button>
      <output className="ml-px flex flex-1 items-center bg-[#ffffcc] pl-[2px] whitespace-pre">{'<M1> - Select first area corner'}</output>
      <div className="ml-px w-[71px] overflow-hidden bg-[#54cfaf] py-[2px] pl-[5px]">
        <button className="flex h-[28px] w-[80px] items-center gap-2 border-2 border-t-[#a7ecd8] border-r-[#2f8a72] border-b-[#2f8a72] border-l-[#a7ecd8] pl-1 text-[15px]">
          Inch
          <span className="h-[7px] w-3 border-2 border-t-[#a7ecd8] border-r-[#2f8a72] border-b-[#2f8a72] border-l-[#a7ecd8]" />
        </button>
      </div>
    </div>
  );
}

function MiniPad({ viewBox, body, black, red }) {
  return (
    <svg viewBox={viewBox} className="block size-full bg-[#439a00]" role="img" aria-label="Magnified pad">
      <path d={black} fill="#000" />
      <rect {...body} fill="#bd9800" rx="4" />
      <path d={red} fill="#ff0000" />
    </svg>
  );
}

const popTools = ['link', 'popUp', 'popDown', 'popLeft', 'popRight', 'squeeze', 'zoomOut'];

function Popview({ title, className, titleClass, closeClass, children }) {
  return (
    <section className={clsx('absolute flex flex-col rounded-md border border-[#a4a4a4] px-1 pb-[3px] shadow-[0_6px_12px_rgba(0,0,0,0.7)]', className)}>
      <div className="flex h-[26px] shrink-0 items-center gap-[6px] pb-px pl-px">
        <XIcon />
        <h2 className={clsx("rounded-full font-['Open_Sans',sans-serif] text-[13px] leading-[14px] whitespace-nowrap", titleClass)}>{title}</h2>
        <button aria-label={`Close ${title}`} className={clsx('ml-auto flex h-[19px] w-12 items-center justify-center self-start rounded-b border border-t-0 border-[#b8b8b8]', closeClass)}>
          <svg viewBox="0 0 12 10" className="h-[10px] w-3">
            <path d="M2 1L10 9M10 1L2 9" stroke="#333" strokeWidth="4" />
            <path d="M2 1L10 9M10 1L2 9" stroke="#fff" strokeWidth="3" />
          </svg>
        </button>
      </div>
      <div className="flex min-h-0 flex-1 flex-col border border-[#c0c0c0] bg-black p-px">
        <div className="flex min-h-0 flex-1 gap-px">
          <div className="min-w-0 flex-1 border-3 border-t-[#2f6b5c] border-r-[#bfeee0] border-b-[#bfeee0] border-l-[#2f6b5c]">
            <div className="size-full border border-black">{children}</div>
          </div>
          <div className="w-[35px] border-t border-black bg-[#54cfaf]">
            {popTools.map((name) => (
              <div key={name} className="h-[35px] border-b-2 border-black bg-[#54b99c] p-[2px]">
                <button aria-label={name} className={clsx('flex h-[29px] w-[31px] items-center justify-center', AQUA, RAISED)}>
                  <Glyph name={name} className="size-[22px]" />
                </button>
              </div>
            ))}
          </div>
        </div>
        <div className="mt-px bg-[#54cfaf] p-[2px]">
          <button className={clsx("h-[24px] w-full font-['Liberation_Mono',monospace] text-[15px] leading-[20px] font-bold", AQUA, RAISED)}>
            Close
          </button>
        </div>
      </div>
    </section>
  );
}

const taskIcons = {
  shell: (
    <>
      <path d="M15 27L2 17Q0 8 6 5Q14 -1 24 5Q30 9 28 17Z" fill="#f3c46c" />
      <path d="M15 27L4 10M15 27L9 4M15 27V2M15 27L21 4M15 27L26 10" stroke="#c98a2e" />
      <path d="M18 12L20 18L27 18L22 22L24 29L18 25L12 29L14 22L9 18L16 18Z" fill="#f08a24" stroke="#b95b10" />
    </>
  ),
  notes: (
    <>
      <rect x="3" y="0" width="24" height="30" rx="2" fill="#e8f4fa" />
      <path d="M6 4H24M6 8H24M6 12H24M6 16H24M6 20H24M6 24H24" stroke="#2f93c4" strokeWidth="2" />
    </>
  ),
  floppy: (
    <>
      <path d="M0 0H28L30 2V30H0Z" fill="#2b3fc0" />
      <rect x="8" y="0" width="14" height="11" fill="#cfd4e4" />
      <rect x="14" y="2" width="5" height="8" fill="#1a2a80" />
      <rect x="3" y="14" width="24" height="16" fill="#fff" />
      <path d="M5 18H25M5 22H25M5 26H14" stroke="#a33" />
      <text x="15" y="29" fontSize="8" fontWeight="bold" fontFamily="Liberation Sans">64</text>
    </>
  ),
  red: <path d="M28 0L26 7L13 10Q9 14 9 20Q9 25 14 24Q19 23 21 18L16 19L19 13L28 12Q29 27 19 30H6Q1 26 3 17Q5 8 12 4Z" fill="#d8311f" />,
  wing: (
    <>
      <rect x="1" y="0" width="28" height="30" rx="4" fill="#1590f7" />
      <path d="M8 6Q19 10 21 16L20 19H22L17 27L17 21Q11 19 10 15L13 16Q8 12 8 6Z" fill="#fff" />
    </>
  ),
  green: (
    <>
      <path d="M5 0H22V7H10L3 14" fill="none" stroke="#1e8a3c" />
      <path d="M10 8H22Q30 10 27 17Q24 22 16 21L13 30H5L9 20Q5 14 10 8Z" fill="#12883a" />
      <circle cx="18" cy="15" r="3" fill="#27496f" />
    </>
  ),
  word: (
    <>
      <path d="M6 1L22 0L29 8V29L1 26Q0 10 6 1Z" fill="#e9eef8" stroke="#5a78b8" />
      <path d="M17 9H27M17 13H27M17 17H27M8 22H27M8 26H27" stroke="#3a5da8" strokeWidth="2" />
      <text x="4" y="19" fontSize="15" fontWeight="bold" fontFamily="Liberation Serif" fill="#1c3f94">W</text>
    </>
  ),
  excel: (
    <>
      <path d="M6 1L22 0L29 8V29L1 26Q0 10 6 1Z" fill="#edf6e8" stroke="#5a9a48" />
      <path d="M18 9h9v4h-9zM18 15h9v5h-9zM8 22h8v5h-8zM18 22h9v5h-9z" fill="#8cba6c" />
      <text x="5" y="20" fontSize="17" fontWeight="bold" fontFamily="Liberation Sans" fill="#1d6b2c">X</text>
    </>
  ),
  disc: (
    <>
      <path d="M1 5Q8 -1 13 5L10 8H2Z" fill="#18b5b0" />
      <path d="M3 12L10 8L8 24L2 18Z" fill="#5d6a72" />
      <ellipse cx="18" cy="17" rx="12" ry="9" fill="#f0dc70" />
      <ellipse cx="18" cy="16" rx="12" ry="9" fill="#119c94" />
      <ellipse cx="18" cy="15" rx="7" ry="5" fill="none" stroke="#8fe0c8" />
      <circle cx="18" cy="14" r="4" fill="#e8d23c" />
      <circle cx="18" cy="14" r="2" fill="#0a4b50" />
    </>
  ),
  xwin: (
    <>
      <path d="M30 1L18 14L2 29" stroke="#3c2020" strokeWidth="3" />
      <path d="M29 1L2 28" stroke="#fff" strokeWidth="2" />
      <path d="M0 1H9L30 29H21Z" fill="#7b1080" stroke="#fff" />
    </>
  ),
};

const tasks = [
  { icon: 'shell' },
  { icon: 'notes' },
  { icon: 'floppy' },
  { icon: 'red' },
  { icon: 'wing' },
  { icon: 'green' },
  { icon: 'word' },
  { icon: 'excel', stacked: true },
  { icon: 'disc' },
  { icon: 'xwin', stacked: true, active: true },
  { icon: 'disc' },
];

function Taskbar() {
  return (
    <footer className="flex h-[41px] shrink-0 items-stretch border-t border-[#0a1830] bg-linear-to-r from-[#0d2850] via-[#153a6c] via-50% to-[#0c2344] text-white">
      <button aria-label="Start" className="flex w-[60px] items-center pl-[9px]">
        <svg viewBox="0 0 38 38" className="size-[38px]">
          <defs>
            <radialGradient id="orb" cx="0.500" cy="0.900" r="0.900">
              <stop offset="0" stopColor="#3fd0f5" />
              <stop offset="0.500" stopColor="#1c6296" />
              <stop offset="1" stopColor="#7d9cb8" />
            </radialGradient>
          </defs>
          <circle cx="18" cy="19" r="18" fill="url(#orb)" stroke="#86a5bf" />
          <path d="M10 11Q14 8 18 11L17 18Q13 15 8 18Z" fill="#e8662a" />
          <path d="M19 12Q24 15 29 12L27 19Q23 21 18 19Z" fill="#8cc63e" />
          <path d="M8 20Q12 17 16 20L15 27Q11 24 6 27Z" fill="#4aa5e8" />
          <path d="M18 21Q22 23 27 21L25 28Q21 30 16 28Z" fill="#fcc62d" />
        </svg>
      </button>
      <div className="flex flex-1 items-stretch gap-1 pt-px pb-px">
        {tasks.map((task, i) => (
          <div key={i} className="flex">
            <button
              aria-label={task.icon}
              className={clsx(
                'flex items-center justify-center rounded-xs border',
                task.stacked ? 'w-[50px]' : 'w-[58px]',
                task.active
                  ? 'border-[#fff0c0] bg-linear-to-b from-[#e8d468] to-[#cf6f20]'
                  : 'border-[#8a9fc0] bg-linear-to-br from-[#8494ad] via-[#35527f] via-45% to-[#1d4176]',
              )}
            >
              <svg viewBox="0 0 31 31" className="size-[31px]">
                {taskIcons[task.icon]}
              </svg>
            </button>
            {task.stacked && (
              <>
                <span className="w-[3px] rounded-r-xs border-y border-r border-[#8a9fc0]" />
                <span className="w-[4px] rounded-r-xs border-y border-r border-[#6d83a8]" />
              </>
            )}
          </div>
        ))}
      </div>
      <div className="flex items-center gap-2">
        <svg viewBox="0 0 16 14" className="mb-1 h-[14px] w-4">
          <path d="M4 5Q6 1 9 3T14 0" fill="none" stroke="#ccc" />
          <rect x="0" y="5" width="16" height="9" rx="1" fill="#e0e0e0" />
          <path d="M2 8H14M2 10H14M4 12H12" stroke="#666" strokeDasharray="1 1" />
        </svg>
        <span className="mb-1 flex size-[15px] items-center justify-center rounded-full border border-[#c0c8ff] bg-[#1420b0] text-[12px] leading-none font-bold">?</span>
        <svg viewBox="0 0 8 16" className="mb-1 h-4 w-2">
          <path d="M3 0.500H7.500V4H3ZM0.500 2.500H5V6H0.500Z" fill="#123" stroke="#fff" />
          <path d="M1 12H7L4 15Z" fill="#fff" />
        </svg>
        <svg viewBox="0 0 8 4" className="ml-1 h-1 w-2">
          <path d="M0 4L4 0L8 4Z" fill="#fff" />
        </svg>
        <svg viewBox="0 0 16 15" className="ml-1 h-[15px] w-4">
          <path d="M1 0V15" stroke="#fff" strokeWidth="2" />
          <path d="M2 1H8L9 2H14V9H7L6 8H2Z" fill="#fff" />
          <circle cx="11" cy="10" r="5" fill="#d22" />
          <path d="M9 8L13 12M13 8L9 12" stroke="#fff" strokeWidth="2" />
        </svg>
        <svg viewBox="0 0 15 13" className="h-[13px] w-[15px]">
          <path d="M0 4H3L7 0V13L3 9H0Z" fill="#fff" />
          <path d="M9 4Q11 6 9 9M11 2Q14 6 11 11" fill="none" stroke="#fff" />
        </svg>
        <svg viewBox="0 0 16 15" className="h-[15px] w-4">
          <path d="M5 4H15V11H5ZM3 14H13M9 11V14M1 1H5V5L3 7V14M1 1V5" fill="none" stroke="#fff" strokeWidth="1.500" />
        </svg>
      </div>
      <div className="flex w-[84px] flex-col items-center justify-center pl-[6px] font-['Open_Sans',sans-serif] text-[13px] leading-[18px]">
        <span>22:03</span>
        <span>2022/8/17</span>
      </div>
      <button aria-label="Show desktop" className="w-[14px] border border-[#6d83a8] bg-linear-to-b from-[#506a90] to-[#1b3355]" />
    </footer>
  );
}

export default function App() {
  return (
    <div className="relative flex h-screen flex-col overflow-hidden bg-[#0d2850] font-['Open_Sans',sans-serif] text-black">
      <div className="flex min-h-0 flex-1 flex-col">
        <TitleBar />
        <div className="flex min-h-0 flex-1 border-b-6 border-l-7 border-[#b0c8f2]">
          <div className="flex min-w-0 flex-1 flex-col border-l border-[#24333f]">
            <MenuBar />
            <div className="flex min-h-0 flex-1">
              <Sidebar />
              <BoardCanvas />
              <ToolPanel />
            </div>
            <CommandBar />
            <div className="h-[33px] shrink-0 border-t-3 border-b-3 border-t-[#6a9393] border-b-[#d9ffff] bg-black py-px pl-px">
              <div className="size-full border-2 border-t-[#dcffff] border-r-0 border-b-[#5d9696] border-l-[#dcffff] bg-[#b3ffff]" />
            </div>
          </div>
        </div>
      </div>
      <Taskbar />

      <Popview
        title="Popview - 1"
        className="top-[233px] right-[122px] h-[329px] w-[450px] bg-linear-to-r from-[#3a3a3a] via-[#101010] via-60% to-[#46505c]"
        titleClass="bg-[#5a5a5a]/60 text-[#0a0a0a] shadow-[0_0_8px_5px_rgba(90,90,90,0.6)]"
        closeClass="bg-linear-to-r from-[#333] to-[#7d94a0]"
      >
        <MiniPad
          viewBox="1357 264 394 259"
          body={{ x: 1489, y: 372, width: 160, height: 44 }}
          black="M1510 368H1546V372H1510ZM1592 368H1630V372H1592ZM1505 415H1546V419H1505ZM1592 415H1633V419H1592Z"
          red="M1510 372H1546V379H1518ZM1592 372H1630L1621 379H1592ZM1510 416H1546V408H1519ZM1592 416H1630L1620 408H1592Z"
        />
      </Popview>
      <Popview
        title="Popview - 2"
        className="top-[661px] right-[171px] h-[312px] w-[397px] bg-linear-to-b from-[#6e7276] via-[#3a3e42] via-12% to-[#6f7d86]"
        titleClass="bg-[#9a9a9a]/60 text-[#0a0a0a] shadow-[0_0_8px_5px_rgba(154,154,154,0.6)]"
        closeClass="bg-linear-to-b from-[#d98a78] via-[#b8321c] to-[#c65a40]"
      >
        <MiniPad
          viewBox="1362 693 340 241"
          body={{ x: 1443, y: 783, width: 146, height: 40 }}
          black="M1458 780H1495V784H1458ZM1537 780H1575V784H1537ZM1456 822H1495V826H1456ZM1537 822H1577V826H1537Z"
          red="M1462 783H1495V790H1469ZM1537 783H1571L1564 790H1537ZM1463 823H1495V816H1470ZM1537 823H1570L1563 816H1537Z"
        />
      </Popview>
    </div>
  );
}
